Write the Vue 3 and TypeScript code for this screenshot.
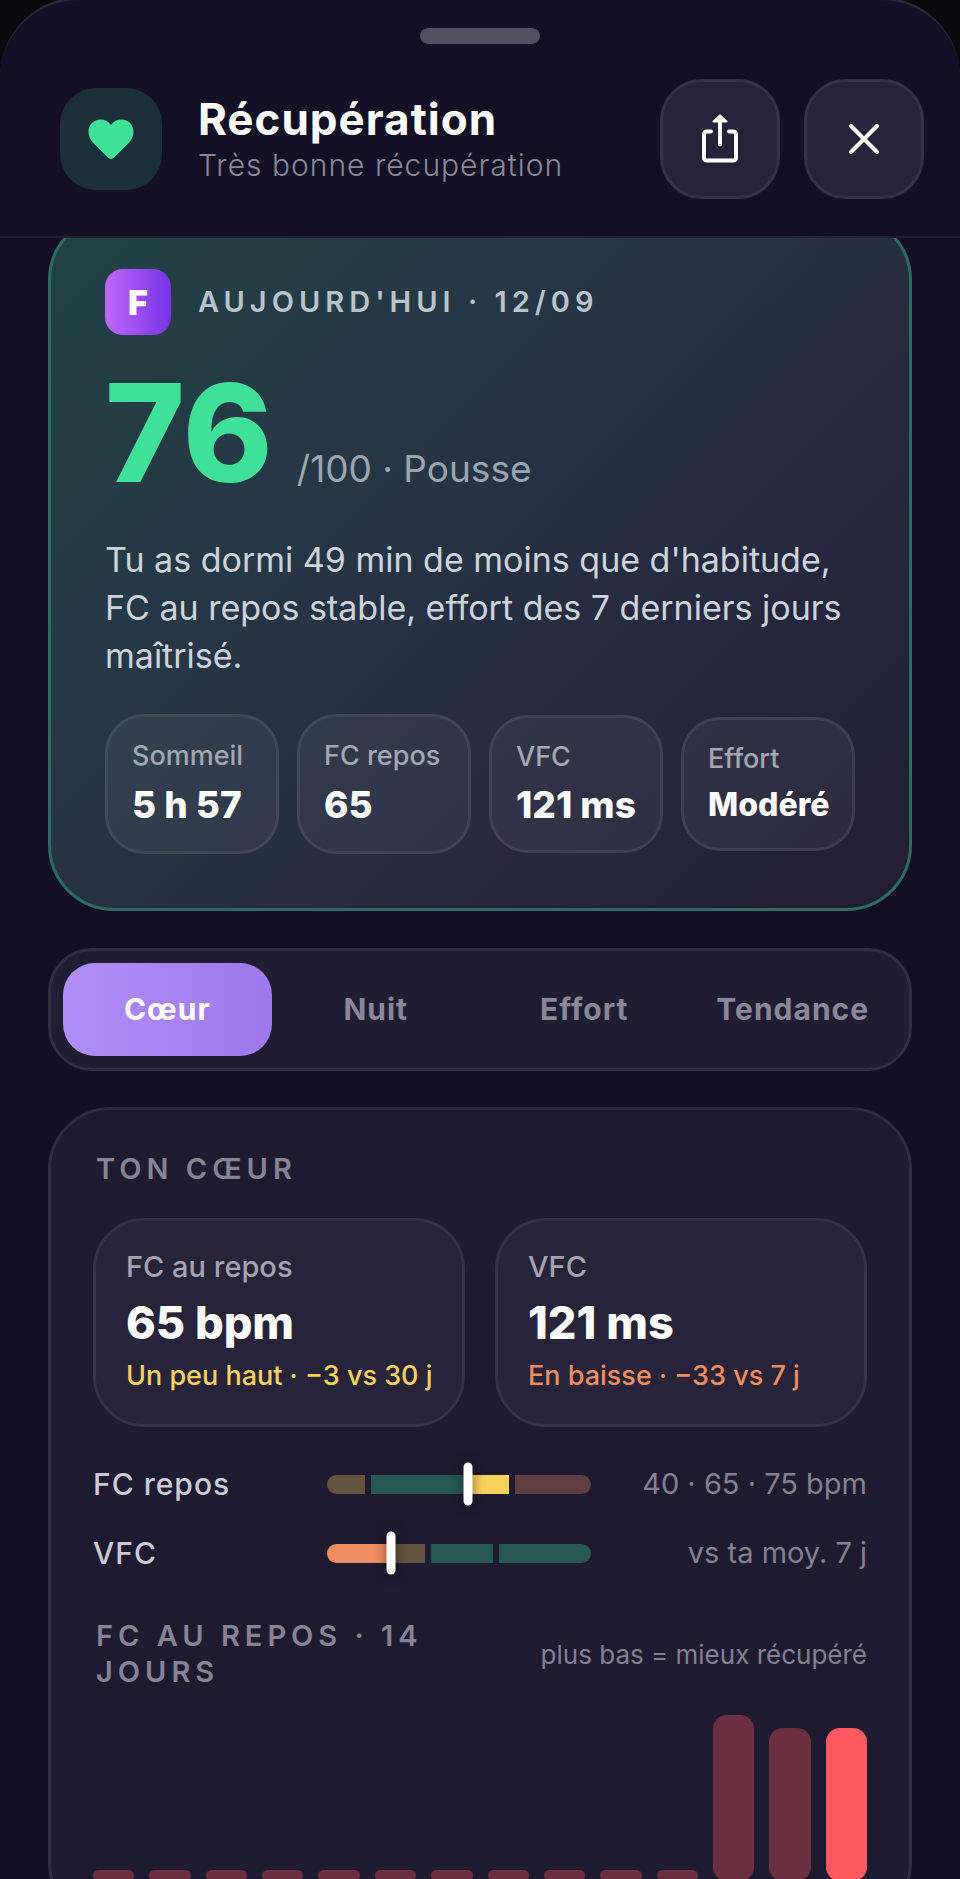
<script setup lang="ts">
import { ref } from 'vue'

interface Chip { label: string; value: string; size: 'large' | 'medium' | 'small' }
interface Stat { label: string; value: string; note: string; tone: 'yellow' | 'orange' }
interface Segment { size: number; tone: string }
interface Gauge { label: string; marker: number; caption: string; segments: Segment[] }

const chips: Chip[] = [
  { label: 'Sommeil', value: '5 h 57', size: 'large' },
  { label: 'FC repos', value: '65', size: 'large' },
  { label: 'VFC', value: '121 ms', size: 'medium' },
  { label: 'Effort', value: 'Modéré', size: 'small' },
]

const tabs = ['Cœur', 'Nuit', 'Effort', 'Tendance']
const activeTab = ref('Cœur')

const stats: Stat[] = [
  { label: 'FC au repos', value: '65 bpm', note: 'Un peu haut · −3 vs 30 j', tone: 'yellow' },
  { label: 'VFC', value: '121 ms', note: 'En baisse · −33 vs 7 j', tone: 'orange' },
]

const gauges: Gauge[] = [
  {
    label: 'FC repos',
    marker: 53.5,
    caption: '40 · 65 · 75 bpm',
    segments: [
      { size: 38, tone: 'olive' },
      { size: 95, tone: 'teal' },
      { size: 37, tone: 'yellow' },
      { size: 76, tone: 'maroon' },
    ],
  },
  {
    label: 'VFC',
    marker: 24.2,
    caption: 'vs ta moy. 7 j',
    segments: [
      { size: 61, tone: 'orange' },
      { size: 31, tone: 'olive' },
      { size: 62, tone: 'teal' },
      { size: 92, tone: 'teal' },
    ],
  },
]

const restingHistory = [5, 5, 5, 5, 5, 5, 5, 5, 5, 5, 5, 100, 92, 92]
</script>

<template>
  <div class="screen">
    <main class="sheet">
      <header class="head">
        <span class="handle"></span>
        <div class="head-row">
          <span class="head-icon">
            <svg viewBox="0 0 48 44" width="48" height="44" aria-hidden="true">
              <path d="M24 42 C22.8 42 21.8 41.5 20.8 40.6 L6.5 26.3 C3.4 23.1 1.5 19.4 1.5 14.8 C1.5 7.8 6.8 2.5 13.2 2.5 C17.6 2.5 21.4 4.3 24 8 C26.6 4.3 30.4 2.5 34.8 2.5 C41.2 2.5 46.5 7.8 46.5 14.8 C46.5 19.4 44.6 23.1 41.5 26.3 L27.2 40.6 C26.2 41.5 25.2 42 24 42 Z" fill="#3fe098" />
            </svg>
          </span>
          <div class="head-text">
            <h1>Récupération</h1>
            <p>Très bonne récupération</p>
          </div>
          <button class="icon-button" type="button" aria-label="Partager">
            <svg viewBox="0 0 40 50" width="40" height="50" fill="none" stroke="#fff" stroke-width="4" stroke-linecap="round" stroke-linejoin="round" aria-hidden="true">
              <path d="M11 17.500 H7 Q4 17.500 4 20.500 V43.500 Q4 46.500 7 46.500 H33 Q36 46.500 36 43.500 V20.500 Q36 17.500 33 17.500 H29" />
              <path d="M20 30.500 V5" />
              <path d="M20 1.500 L26.500 7.500 H13.500 Z" fill="#fff" stroke-width="2" />
            </svg>
          </button>
          <button class="icon-button" type="button" aria-label="Fermer">
            <svg viewBox="0 0 32 32" width="32" height="32" fill="none" stroke="#fff" stroke-width="4" stroke-linecap="round" aria-hidden="true">
              <path d="M3 3 L29 29 M29 3 L3 29" />
            </svg>
          </button>
        </div>
      </header>

      <div class="content">
        <section class="hero">
          <div class="hero-top">
            <span class="badge">F</span>
            <span class="eyebrow bright">AUJOURD'HUI · 12/09</span>
          </div>
          <div class="score">
            <strong>76</strong>
            <span>/100 · Pousse</span>
          </div>
          <p class="summary">Tu as dormi 49 min de moins que d'habitude, FC au repos stable, effort des 7 derniers jours maîtrisé.</p>
          <dl class="chips">
            <div v-for="chip in chips" :key="chip.label" class="chip" :class="chip.size">
              <dt>{{ chip.label }}</dt>
              <dd>{{ chip.value }}</dd>
            </div>
          </dl>
        </section>

        <nav class="tabs" role="tablist">
          <button
            v-for="tab in tabs"
            :key="tab"
            type="button"
            role="tab"
            class="tab"
            :class="{ active: tab === activeTab }"
            :aria-selected="tab === activeTab"
            @click="activeTab = tab"
          >{{ tab }}</button>
        </nav>

        <section class="panel">
          <h2 class="eyebrow">TON CŒUR</h2>
          <div class="stats">
            <article v-for="stat in stats" :key="stat.label" class="stat">
              <span class="stat-label">{{ stat.label }}</span>
              <strong>{{ stat.value }}</strong>
              <span class="stat-note" :class="stat.tone">{{ stat.note }}</span>
            </article>
          </div>

          <div class="gauges">
            <div v-for="gauge in gauges" :key="gauge.label" class="gauge">
              <span class="gauge-label">{{ gauge.label }}</span>
              <div class="track">
                <span
                  v-for="(segment, i) in gauge.segments"
                  :key="i"
                  class="segment"
                  :class="segment.tone"
                  :style="{ flexGrow: segment.size }"
                ></span>
                <span class="marker" :style="{ left: gauge.marker + '%' }"></span>
              </div>
              <span class="gauge-caption">{{ gauge.caption }}</span>
            </div>
          </div>

          <div class="chart-head">
            <h2 class="eyebrow">FC AU REPOS · 14 JOURS</h2>
            <span>plus bas = mieux récupéré</span>
          </div>
          <div class="chart">
            <span
              v-for="(value, i) in restingHistory"
              :key="i"
              class="bar"
              :class="{ today: i === restingHistory.length - 1 }"
              :style="{ height: value + '%' }"
            ></span>
          </div>
        </section>
      </div>
    </main>
  </div>
</template>

<style>
html,
body {
  margin: 0;
  background: #09090e;
}
</style>

<style scoped>
.screen {
  display: flex;
  flex-direction: column;
  height: 100vh;
  overflow: hidden;
  background: #09090e;
  color: #fff;
  font-family: Inter, "Liberation Sans", sans-serif;
}

.screen *,
.sheet {
  box-sizing: border-box;
}

h1, h2, p, dl, dd {
  margin: 0;
}

button {
  padding: 0;
  border: 0;
  font: inherit;
  color: inherit;
}

.sheet {
  display: flex;
  flex: 1;
  flex-direction: column;
  min-height: 0;
  margin-top: -3px;
  overflow: hidden;
  border-top: 3px solid #2a283a;
  background: #131026;
  border-radius: 80px 80px 0 0;
}

.head {
  flex: none;
  display: flex;
  flex-direction: column;
  align-items: center;
  gap: 35px;
  padding: 28px 36px 37px 60px;
  border-bottom: 2px solid #221f34;
}

.handle {
  width: 120px;
  height: 16px;
  margin-left: -24px;
  border-radius: 8px;
  background: #524f63;
}

.head-row {
  display: flex;
  align-items: center;
  align-self: stretch;
  gap: 24px;
}

.head-icon {
  display: grid;
  place-items: center;
  width: 102px;
  height: 102px;
  margin-right: 12px;
  border-radius: 36px;
  background: #1b2f3a;
}

.head-text {
  flex: 1;
}

.head-text h1 {
  font-size: 44px;
  line-height: 52px;
  font-weight: 700;
  letter-spacing: 1px;
}

.head-text p {
  font-size: 30px;
  line-height: 40px;
  font-weight: 300;
  letter-spacing: 1px;
  color: #8a8799;
}

.icon-button {
  display: grid;
  place-items: center;
  width: 120px;
  height: 120px;
  border: 3px solid #353247;
  border-radius: 42px;
  background: #262339;
}

.content {
  flex: 1;
  min-height: 0;
  overflow: hidden;
  padding: 0 48px;
}

.hero {
  margin-top: -24px;
  padding: 52px 54px 54px;
  border: 3px solid #2f6b66;
  border-radius: 66px;
  background: linear-gradient(135deg, #204344 0%, #263746 35%, #26273e 72%, #211c31 100%);
}

.hero-top {
  display: flex;
  align-items: center;
  gap: 27px;
}

.badge {
  display: grid;
  place-items: center;
  width: 66px;
  height: 66px;
  border-radius: 18px;
  background: linear-gradient(90deg, #bf68fa, #7733e6);
  font-size: 34px;
  font-weight: 900;
}

.eyebrow {
  font-size: 29px;
  line-height: 36px;
  font-weight: 600;
  letter-spacing: 5px;
  color: #868395;
}

.eyebrow.bright {
  color: #b9c4ca;
}

.score {
  display: flex;
  align-items: baseline;
  gap: 24px;
  margin-top: 32px;
}

.score strong {
  font-size: 136px;
  line-height: 132px;
  font-weight: 800;
  color: #3fe098;
}

.score span {
  font-size: 37px;
  color: #9ba5af;
}

.summary {
  margin-top: 37px;
  font-size: 34px;
  line-height: 48px;
  color: #cdd3da;
}

.chips {
  display: grid;
  grid-template-columns: repeat(4, minmax(0, 1fr));
  align-items: center;
  gap: 18px;
  margin-top: 34px;
}

.chip {
  padding: 23px 0 24px 24px;
  border: 3px solid rgba(255, 255, 255, 0.08);
  border-radius: 39px;
  background: rgba(255, 255, 255, 0.05);
  white-space: nowrap;
}

.chip dt {
  font-size: 27px;
  line-height: 32px;
  font-weight: 500;
  color: #a3a7b3;
}

.chip dd {
  margin-top: 11px;
  font-size: 37px;
  line-height: 44px;
  font-weight: 800;
}

.chip.medium dd {
  line-height: 42px;
}

.chip.small dd {
  font-size: 32px;
  line-height: 38px;
}

.tabs {
  display: grid;
  grid-template-columns: repeat(4, 1fr);
  margin-top: 37px;
  padding: 12px;
  border: 3px solid #302d41;
  border-radius: 44px;
  background: #201d33;
}

.tab {
  height: 93px;
  padding-bottom: 2px;
  border-radius: 32px;
  background: none;
  font-size: 30px;
  font-weight: 700;
  letter-spacing: 1px;
  color: #8a8798;
}

.tab.active {
  background: linear-gradient(90deg, #b18ef6, #9d79ec);
  color: #fff;
}

.panel {
  margin-top: 36px;
  padding: 41px 42px;
  border: 3px solid #2f2c40;
  border-radius: 63px;
  background: #1e1b30;
}

.panel .eyebrow {
  padding-left: 3px;
}

.stats {
  display: grid;
  grid-template-columns: repeat(2, minmax(0, 1fr));
  gap: 30px;
  margin-top: 31px;
}

.stat {
  display: flex;
  flex-direction: column;
  padding: 28px 30px 30px;
  border: 3px solid #353247;
  border-radius: 51px;
  background: #272339;
  white-space: nowrap;
}

.stat-label {
  font-size: 29px;
  line-height: 36px;
  font-weight: 500;
  color: #a5a2b2;
}

.stat strong {
  margin-top: 10px;
  font-size: 45px;
  line-height: 56px;
  font-weight: 800;
}

.stat-note {
  margin-top: 7px;
  font-size: 27px;
  line-height: 36px;
  font-weight: 500;
}

.stat-note.yellow {
  color: #f9d25c;
}

.stat-note.orange {
  color: #f08d60;
}

.gauges {
  display: grid;
  gap: 33px;
  margin-top: 39px;
}

.gauge {
  display: grid;
  grid-template-columns: 210fr 264fr 252fr;
  align-items: center;
  gap: 24px;
}

.gauge-label {
  font-size: 30px;
  line-height: 36px;
  font-weight: 500;
  letter-spacing: 1px;
  color: #cccad4;
}

.track {
  position: relative;
  display: flex;
  gap: 6px;
  height: 19px;
}

.segment {
  flex: 1 1 0;
}

.segment:first-child {
  border-radius: 10px 0 0 10px;
}

.segment:nth-child(4) {
  border-radius: 0 10px 10px 0;
}

.olive { background: #62543f; }
.teal { background: #275854; }
.maroon { background: #603d41; }
.segment.yellow { background: #f9d25c; }
.segment.orange { background: #f08d60; }

.marker {
  position: absolute;
  top: 50%;
  width: 9px;
  height: 43px;
  border-radius: 5px;
  background: #fff;
  box-shadow: 0 0 12px rgba(0, 0, 0, 0.5);
  transform: translate(-50%, -50%);
}

.gauge-caption {
  font-size: 29px;
  line-height: 36px;
  text-align: right;
  white-space: nowrap;
  color: #838092;
}

.chart-head {
  display: flex;
  align-items: center;
  justify-content: space-between;
  gap: 24px;
  margin-top: 47px;
}

.chart-head h2 {
  max-width: 380px;
}

.chart-head span {
  font-size: 26px;
  white-space: nowrap;
  color: #838092;
}

.chart {
  display: flex;
  align-items: flex-end;
  gap: 15px;
  height: 166px;
  margin-top: 25px;
}

.bar {
  flex: 1;
  min-height: 11px;
  border-radius: 14px;
  background: #6b2f42;
}

.bar.today {
  background: #ff5a61;
}
</style>
